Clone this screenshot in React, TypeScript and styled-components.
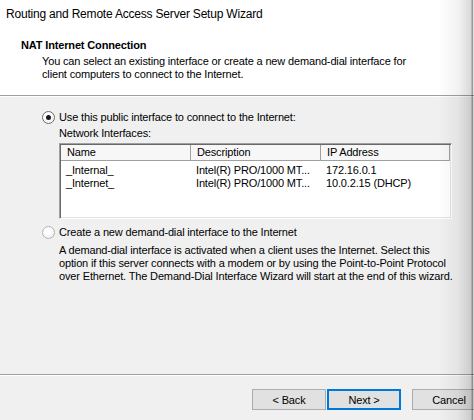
import styled, { createGlobalStyle } from "styled-components";

const GlobalStyle = createGlobalStyle`
  html, body {
    margin: 0;
    padding: 0;
    background: #f0f0f0;
  }
`;

const Window = styled.div`
  position: relative;
  width: 474px;
  height: 420px;
  overflow: hidden;
  display: flex;
  flex-direction: column;
  background: #f0f0f0;
  color: #000;
  font-family: "Liberation Sans", Arial, sans-serif;
  font-size: 11px;
  line-height: 13px;
  letter-spacing: -0.15px;
`;

const Header = styled.header`
  height: 95px;
  box-sizing: border-box;
  padding: 7px 0 0 6px;
  background: #fff;
`;

const WindowTitle = styled.div`
  font-size: 12px;
  line-height: 15px;
  letter-spacing: -0.2px;
`;

const PageTitle = styled.div`
  margin: 17px 0 0 15px;
  font-weight: bold;
`;

const PageDesc = styled.div`
  margin: 3px 0 0 36px;
`;

const Separator = styled.div`
  height: 0;
  border-top: 1px solid #a0a0a0;
  border-bottom: 1px solid #fff;
`;

const Body = styled.main`
  flex: 1;
  padding: 14px 0 0 42px;
`;

const RadioRow = styled.label<{ $gap?: number }>`
  display: flex;
  align-items: center;
  gap: 4px;
  height: 13px;
  margin-top: ${(p) => p.$gap ?? 0}px;
`;

const Radio = styled.span<{ $checked?: boolean }>`
  position: relative;
  width: 13px;
  height: 13px;
  box-sizing: border-box;
  border-radius: 50%;
  border: 1px solid ${(p) => (p.$checked ? "#6e6e6e" : "#b4b4b4")};
  background: radial-gradient(circle at 40% 35%, #fff 30%, #e6e6e6 100%);
  flex: none;
  &::after {
    content: "";
    display: ${(p) => (p.$checked ? "block" : "none")};
    position: absolute;
    left: 3px;
    top: 3px;
    width: 5px;
    height: 5px;
    border-radius: 50%;
    background: #1a1a1a;
  }
`;

const Indent = styled.div<{ $gap?: number }>`
  margin: ${(p) => p.$gap ?? 0}px 0 0 17px;
`;

const ListBox = styled.div`
  width: 393px;
  height: 76px;
  box-sizing: border-box;
  margin-top: 3px;
  background: #fff;
  border-style: solid;
  border-width: 1px;
  border-color: #a0a0a0 #fff #fff #a0a0a0;
  box-shadow: inset 1px 1px 0 #696969, inset -1px -1px 0 #e3e3e3;
  padding: 1px 0 0 1px;
`;

const Columns = styled.div`
  display: grid;
  grid-template-columns: 130px 130px 129px;
`;

const HeadCell = styled.div`
  height: 15px;
  padding-left: 6px;
  line-height: 15px;
  border-right: 1px solid #a0a0a0;
  border-bottom: 1px solid #a0a0a0;
  background: #f7f7f7;
  overflow: hidden;
  white-space: nowrap;
`;

const Rows = styled.div`
  padding-top: 3px;
`;

const Cell = styled.div`
  padding-left: 5px;
  height: 13px;
  white-space: nowrap;
  overflow: hidden;
`;

const Paragraph = styled.p`
  margin: 5px 0 0 17px;
`;

const Footer = styled.footer`
  height: 44px;
  box-sizing: border-box;
  display: flex;
  padding: 13px 0 0 252px;
`;

const Button = styled.button<{ $default?: boolean; $gap?: number }>`
  flex: none;
  width: 74px;
  height: 21px;
  margin-left: ${(p) => p.$gap ?? 0}px;
  padding: 0;
  box-sizing: border-box;
  border: ${(p) => (p.$default ? "2px solid #0078d7" : "1px solid #adadad")};
  background: #e1e1e1;
  color: #000;
  font-family: inherit;
  font-size: 11px;
  letter-spacing: inherit;
`;

const EdgeShade = styled.div`
  position: absolute;
  top: 0;
  right: 0;
  bottom: 0;
  width: 36px;
  pointer-events: none;
  background: linear-gradient(
    to right,
    rgba(0, 0, 0, 0) 0,
    rgba(0, 0, 0, 0.05) 20px,
    rgba(0, 0, 0, 0.15) 33px,
    rgba(0, 0, 0, 0.4) 34px,
    rgba(0, 0, 0, 0.4) 35px,
    rgba(0, 0, 0, 0.12) 35px
  );
`;

const interfaces = [
  { name: "_Internal_", desc: "Intel(R) PRO/1000 MT...", ip: "172.16.0.1" },
  { name: "_Internet_", desc: "Intel(R) PRO/1000 MT...", ip: "10.0.2.15 (DHCP)" },
];

export default function App() {
  return (
    <>
      <GlobalStyle />
      <Window>
        <Header>
          <WindowTitle>Routing and Remote Access Server Setup Wizard</WindowTitle>
          <PageTitle>NAT Internet Connection</PageTitle>
          <PageDesc>
            You can select an existing interface or create a new demand-dial interface for
            <br />
            client computers to connect to the Internet.
          </PageDesc>
        </Header>
        <Separator />
        <Body>
          <RadioRow>
            <Radio $checked />
            Use this public interface to connect to the Internet:
          </RadioRow>
          <Indent $gap={3}>
            Network Interfaces:
            <ListBox>
              <Columns>
                <HeadCell>Name</HeadCell>
                <HeadCell>Description</HeadCell>
                <HeadCell>IP Address</HeadCell>
              </Columns>
              <Rows>
                {interfaces.map((it) => (
                  <Columns key={it.name}>
                    <Cell>{it.name}</Cell>
                    <Cell>{it.desc}</Cell>
                    <Cell>{it.ip}</Cell>
                  </Columns>
                ))}
              </Rows>
            </ListBox>
          </Indent>
          <RadioRow $gap={7}>
            <Radio />
            Create a new demand-dial interface to the Internet
          </RadioRow>
          <Paragraph>
            A demand-dial interface is activated when a client uses the Internet. Select this
            <br />
            option if this server connects with a modem or by using the Point-to-Point Protocol
            <br />
            over Ethernet. The Demand-Dial Interface Wizard will start at the end of this wizard.
          </Paragraph>
        </Body>
        <Separator />
        <Footer>
          <Button>&lt; Back</Button>
          <Button $default $gap={1}>Next &gt;</Button>
          <Button $gap={11}>Cancel</Button>
        </Footer>
        <EdgeShade />
      </Window>
    </>
  );
}
